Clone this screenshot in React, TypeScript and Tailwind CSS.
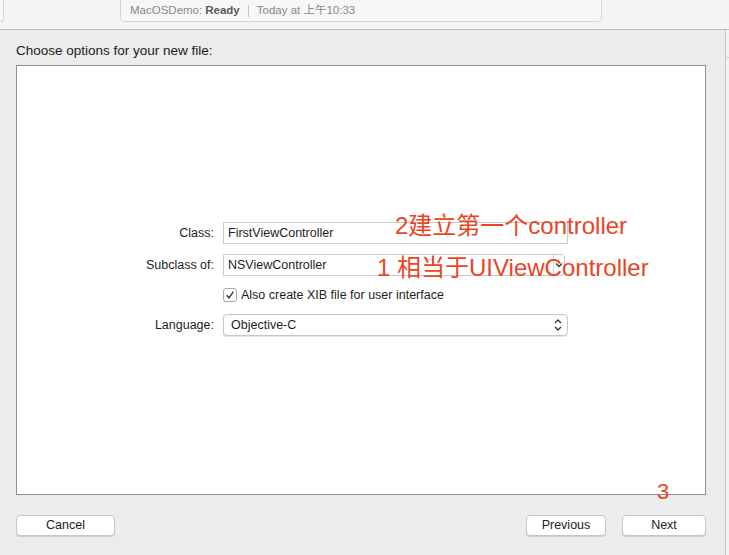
import React from "react";

const font = { fontFamily: '"Liberation Sans", "Noto Sans CJK SC", sans-serif' };

const Field = ({ value, combo }: { value: string; combo?: boolean }) => (
  <div
    className={`h-[22px] bg-white border border-[#c9c9c9] flex items-center text-[12.5px] text-[#1e1e1e] ${
      combo ? "w-[342px] rounded-r-[4px]" : "w-[345px]"
    }`}
  >
    <span className="pl-[4px] flex-1">{value}</span>
    {combo && (
      <div className="w-[11px] h-full border-l border-[#d6d6d6] flex items-center justify-center">
        <svg width="8" height="6" viewBox="0 0 8 6">
          <path d="M1 1.5 L4 4.5 L7 1.5" fill="none" stroke="#333" strokeWidth="1.3" />
        </svg>
      </div>
    )}
  </div>
);

const Button = ({ label, w }: { label: string; w: string }) => (
  <button
    className={`${w} h-[21px] bg-white rounded-[4px] border border-[#c6c6c6] shadow-[0_1px_0_rgba(0,0,0,0.12)] text-[12.5px] text-[#222] flex items-center justify-center`}
  >
    {label}
  </button>
);

export default function App() {
  return (
    <div style={font} className="relative w-[729px] h-[555px] overflow-hidden bg-[#ececec] flex flex-col">
      {/* toolbar */}
      <div className="h-[30px] bg-[#f4f4f4] border-b border-[#bcbcbc] flex items-start shrink-0">
        <div className="w-[4px] h-[22px] bg-[#f8f8f8] border border-l-0 border-t-0 border-[#d4d4d4] rounded-br-[5px]" />
        <div className="ml-[116px] w-[482px] h-[22px] bg-[#f7f7f7] border border-t-0 border-[#d6d6d6] rounded-b-[5px] flex items-center pl-[9px] text-[11.5px] text-[#888]">
          <span>MacOSDemo:</span>
          <span className="ml-[3px] font-bold text-[#5a5a5a]">Ready</span>
          <span className="mx-[8px] w-px h-[12px] bg-[#c4c4c4]" />
          <span>Today at 上午10:33</span>
        </div>
      </div>

      <div className="flex flex-1">
        {/* sheet */}
        <div className="w-[726px] flex flex-col border-r border-[#c9c9c9]">
          <div className="pl-[16px] pt-[11px] h-[35px] text-[13.5px] text-[#1c1c1c]">Choose options for your new file:</div>

          <div className="ml-[16px] w-[690px] h-[430px] bg-white border border-[#8f8f8f] flex flex-col pt-[156px]">
            <div className="grid grid-cols-[197px_auto] gap-x-[9px] items-center">
              <div className="text-right text-[12.5px] text-[#1e1e1e]">Class:</div>
              <Field value="FirstViewController" />
              <div className="h-[10px] col-span-2" />
              <div className="text-right text-[12.5px] text-[#1e1e1e]">Subclass of:</div>
              <Field value="NSViewController" combo />
              <div className="h-[12px] col-span-2" />
              <div />
              <div className="flex items-center gap-[4px] text-[12.5px] text-[#1e1e1e] h-[14px]">
                <div className="w-[14px] h-[14px] bg-white border border-[#a9a9a9] rounded-[3px] flex items-center justify-center">
                  <svg width="10" height="10" viewBox="0 0 10 10">
                    <path d="M1.8 5.2 L4 7.8 L8.4 1.6" fill="none" stroke="#333" strokeWidth="1.4" />
                  </svg>
                </div>
                <span>Also create XIB file for user interface</span>
              </div>
              <div className="h-[12px] col-span-2" />
              <div className="text-right text-[12.5px] text-[#1e1e1e]">Language:</div>
              <div className="w-[345px] h-[22px] bg-white rounded-[4px] border border-[#c6c6c6] shadow-[0_1px_0_rgba(0,0,0,0.1)] flex items-center pl-[7px] pr-[4px] text-[12.5px] text-[#1e1e1e]">
                <span className="flex-1">Objective-C</span>
                <svg width="10" height="14" viewBox="0 0 10 14">
                  <path d="M2 5 L5 2 L8 5 M2 9 L5 12 L8 9" fill="none" stroke="#333" strokeWidth="1.3" />
                </svg>
              </div>
            </div>
          </div>

          <div className="flex items-center pl-[16px] pr-[19px] pt-[20px]">
            <Button label="Cancel" w="w-[99px]" />
            <div className="flex-1" />
            <Button label="Previous" w="w-[80px]" />
            <div className="w-[16px]" />
            <Button label="Next" w="w-[84px]" />
          </div>
        </div>
        <div className="flex-1 bg-[#f2f2f2] flex flex-col">
          <div className="h-[28px] border-b border-[#c9c9c9]" />
        </div>
      </div>

      {/* annotations */}
      <div className="absolute left-[395px] top-[211px] text-[24px] leading-[30px] text-[#ea451f]">2建立第一个controller</div>
      <div className="absolute left-[377px] top-[253px] text-[24px] leading-[30px] text-[#ea451f]">1 相当于UIViewController</div>
      <div className="absolute left-[657px] top-[479px] text-[22px] leading-[26px] text-[#ea451f]">3</div>
    </div>
  );
}
